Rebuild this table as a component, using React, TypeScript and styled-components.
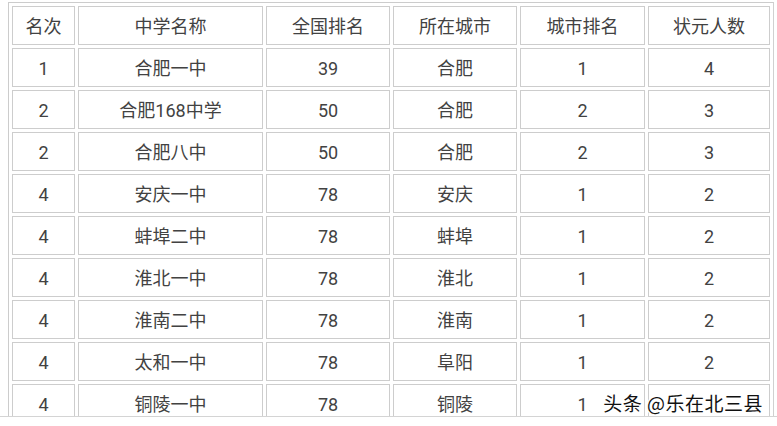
import React from "react";
import styled, { createGlobalStyle } from "styled-components";

const Global = createGlobalStyle`
  html, body { margin: 0; padding: 0; background: #ffffff; }
  body { font-family: Roboto, "Noto Sans CJK SC", "Noto Sans", sans-serif; }
`;

const Page = styled.div`
  position: relative;
  width: 777px;
  height: 426px;
  overflow: hidden;
  background: #fff;
`;

const Frame = styled.div`
  height: 417px;
  overflow: hidden;
  border-bottom: 1px solid #d4d4d4;
  padding: 2px 0 0 8px;
  box-sizing: border-box;
`;

const Table = styled.table`
  border-collapse: separate;
  border-spacing: 3px;
  border: 1px solid #cccccc;
  border-right-color: #d0d0d0;
  table-layout: fixed;
  width: 766px;
`;

const Cell = styled.td<{ $w?: number }>`
  box-sizing: border-box;
  ${(p) => (p.$w ? `width: ${p.$w}px;` : "")}
  height: 39px;
  padding: 3px 0 0 0;
  border: 1px solid #cdcdcd;
  text-align: center;
  vertical-align: middle;
  font-family: Roboto, "Noto Sans CJK SC", sans-serif;
  font-size: 18px;
  font-weight: 400;
  color: #424242;
  line-height: 1;
`;

const Head = styled(Cell).attrs({ as: "th" })``;

const Watermark = styled.div`
  position: absolute;
  right: 14px;
  top: 392px;
  font-family: "Noto Sans CJK SC", sans-serif;
  font-size: 19px;
  line-height: 22px;
  color: #111;
  letter-spacing: 0.5px;
  text-shadow: 1px 0 0 #fff, -1px 0 0 #fff, 0 1px 0 #fff, 0 -1px 0 #fff,
    1px 1px 0 #fff, -1px -1px 0 #fff, 1px -1px 0 #fff, -1px 1px 0 #fff;
  white-space: nowrap;
`;

const widths = [63, 185, 124, 124, 125, 122];
const headers = ["名次", "中学名称", "全国排名", "所在城市", "城市排名", "状元人数"];
const rows: string[][] = [
  ["1", "合肥一中", "39", "合肥", "1", "4"],
  ["2", "合肥168中学", "50", "合肥", "2", "3"],
  ["2", "合肥八中", "50", "合肥", "2", "3"],
  ["4", "安庆一中", "78", "安庆", "1", "2"],
  ["4", "蚌埠二中", "78", "蚌埠", "1", "2"],
  ["4", "淮北一中", "78", "淮北", "1", "2"],
  ["4", "淮南二中", "78", "淮南", "1", "2"],
  ["4", "太和一中", "78", "阜阳", "1", "2"],
  ["4", "铜陵一中", "78", "铜陵", "1", ""],
];

export default function App() {
  return (
    <Page>
      <Global />
      <Frame>
        <Table>
          <thead>
            <tr>
              {headers.map((h, i) => (
                <Head key={h} $w={widths[i]}>
                  {h}
                </Head>
              ))}
            </tr>
          </thead>
          <tbody>
            {rows.map((r, ri) => (
              <tr key={ri}>
                {r.map((c, ci) => (
                  <Cell key={ci}>{c}</Cell>
                ))}
              </tr>
            ))}
          </tbody>
        </Table>
      </Frame>
      <Watermark>头条 @乐在北三县</Watermark>
    </Page>
  );
}
